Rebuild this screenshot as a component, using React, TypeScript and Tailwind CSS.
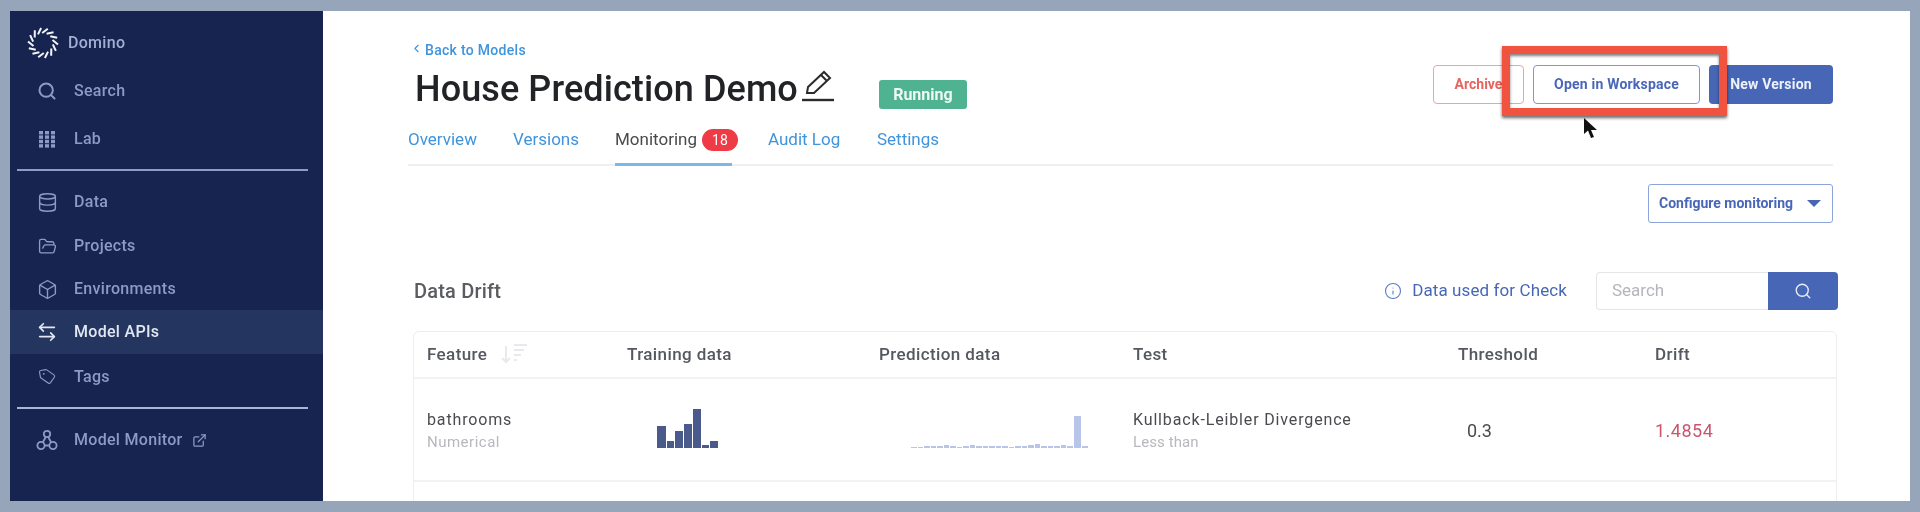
import React from "react";
import { Search, Database, FolderOpen, Box, ArrowLeftRight, Tag, ChevronLeft, Info, ExternalLink } from "lucide-react";

function Logo() {
  const n = 14;
  return (
    <svg width="32" height="32" viewBox="-16 -16 32 32" className="shrink-0">
      {Array.from({ length: n }).map((_, i) => (
        <line key={i} x1="9.5" y1="-3" x2="15" y2="1.5" stroke="#f2f4fa" strokeWidth="2" transform={`rotate(${(360 / n) * i})`} />
      ))}
    </svg>
  );
}

function GridDots() {
  return (
    <svg width="18" height="18" viewBox="0 0 18 18" fill="currentColor">
      {[0, 1, 2, 3].flatMap((r) =>
        [0, 1, 2].map((c) => <rect key={`${r}-${c}`} x={1 + c * 6} y={1 + r * 4.4} width="4" height="3.4" />)
      )}
    </svg>
  );
}

function Monitor() {
  return (
    <svg width="22" height="22" viewBox="0 0 22 22" fill="none" stroke="currentColor" strokeWidth="1.8">
      <circle cx="11" cy="5" r="3.2" />
      <circle cx="5" cy="16.5" r="3.6" />
      <circle cx="17" cy="16.5" r="3.6" />
      <path d="M9.8 8 7 13M12.2 8 15 13M8.6 16.5h4.8" />
    </svg>
  );
}

type NavProps = { icon: React.ReactNode; label: string; active?: boolean; h: string; extra?: React.ReactNode };
function NavItem({ icon, label, active, h, extra }: NavProps) {
  return (
    <div className={`flex items-center pl-[26px] ${h} ${active ? "bg-[#243660] text-[#e3e7f2]" : "text-[#8e9ac4]"}`}>
      <span className="flex w-[22px] justify-center">{icon}</span>
      <span className="ml-[16px] text-[16px] font-medium tracking-[0.3px]">{label}</span>
      {extra}
    </div>
  );
}

const training = [
  [8.5, 22], [7, 7], [7.5, 17], [8, 24], [8, 39], [6.5, 3], [8, 7],
];
const prediction = [1, 1, 2, 2, 2, 3, 2, 1, 2, 3, 2, 2, 2, 2, 2, 1, 2, 2, 3, 4, 2, 2, 2, 3, 2, 32, 2];

export default function App() {
  return (
    <div className="flex h-[512px] w-full bg-[#97a5bb] pt-[11px] pr-[10px] pb-[11px] pl-[10px] blur-[0.6px] font-['Roboto',sans-serif]">
      <aside className="flex w-[313px] shrink-0 flex-col bg-[#17244f]">
        <div className="flex h-[56px] items-center pt-[7px] pl-[17px]">
          <Logo />
          <span className="ml-[9px] text-[16px] font-medium tracking-[0.3px] text-[#a3aed2]">Domino</span>
        </div>
        <NavItem icon={<Search size={20} strokeWidth={2.4} />} label="Search" h="h-[48px]" />
        <NavItem icon={<GridDots />} label="Lab" h="h-[48px]" />
        <div className="mt-[6px] mr-[15px] ml-[7px] h-[2px] bg-[#8b9ccb]" />
        <div className="h-[9px]" />
        <NavItem icon={<Database size={21} strokeWidth={1.6} />} label="Data" h="h-[44px]" />
        <NavItem icon={<FolderOpen size={19} strokeWidth={1.7} />} label="Projects" h="h-[44px]" />
        <NavItem icon={<Box size={21} strokeWidth={1.6} />} label="Environments" h="h-[42px]" />
        <NavItem icon={<ArrowLeftRight size={22} strokeWidth={1.8} />} label="Model APIs" active h="h-[44px]" />
        <NavItem icon={<Tag size={17} strokeWidth={1.6} className="rotate-[-10deg]" />} label="Tags" h="h-[45px]" />
        <div className="mt-[8px] mr-[15px] ml-[7px] h-[2px] bg-[#a9b6da]" />
        <div className="mt-[9px]">
          <NavItem
            icon={<Monitor />}
            label="Model Monitor"
            h="h-[44px]"
            extra={<ExternalLink size={15} strokeWidth={2} className="ml-[9px]" />}
          />
        </div>
      </aside>

      <main className="relative min-w-0 flex-1 overflow-hidden bg-white pt-[31px] pr-[77px] pl-[85px]">
        <div className="flex justify-between">
          <div>
            <div className="flex h-[16px] items-center pl-[2px] text-[14px] font-medium tracking-[0.3px] text-[#3f94dc]">
              <ChevronLeft size={13} strokeWidth={2} className="mb-[3px]" />
              <span className="ml-[2px]">Back to Models</span>
            </div>
            <div className="mt-[9px] flex h-[44px] items-center pl-[7px]">
              <h1 className="text-[36px] font-medium leading-none tracking-[0.1px] text-[#222326]">House Prediction Demo</h1>
              <svg width="34" height="34" viewBox="0 0 34 34" fill="none" stroke="#2a2b2e" strokeWidth="2" className="ml-[3px] mb-[6px]">
                <path d="M6 24 L7 18 L23 3 L29 9 L13 24 Z M20 6 L26 12" />
                <path d="M1 31 H33" strokeWidth="2.4" />
              </svg>
              <span className="ml-[44px] mt-[11px] flex h-[29px] w-[88px] items-center justify-center rounded-[3px] bg-[#4fb391] text-[16px] font-bold text-[#eef8f4]">
                Running
              </span>
            </div>
          </div>
          <div className="flex gap-[9px] pt-[23px]">
            <button className="h-[39px] w-[91px] rounded-[4px] border border-[#f0a3a0] text-[14px] font-bold text-[#e5655f]">Archive</button>
            <button className="h-[39px] w-[167px] rounded-[4px] border border-[#8296d6] text-[14px] font-bold tracking-[0.2px] text-[#4a66b8]">
              Open in Workspace
            </button>
            <button className="h-[39px] w-[124px] rounded-[4px] bg-[#4767b6] text-[14px] font-bold tracking-[0.2px] text-[#eef1fa]">New Version</button>
          </div>
        </div>

        <div className="relative mt-[12px] flex h-[43px] items-center border-b-2 border-[#eef0f2] pb-[7px] text-[17px] text-[#3f94dc]">
          <span className="w-[105px]">Overview</span>
          <span className="w-[102px]">Versions</span>
          <span className="text-[#4a4a4d]">Monitoring</span>
          <span className="ml-[5px] flex h-[22px] w-[36px] items-center justify-center rounded-full bg-[#ef3b45] text-[14px] text-white">18</span>
          <span className="ml-[30px] w-[109px]">Audit Log</span>
          <span>Settings</span>
          <div className="absolute bottom-[-2px] left-[207px] h-[3px] w-[117px] bg-[#7ab8e8]" />
        </div>

        <div className="mt-[18px] flex justify-end">
          <button className="flex h-[39px] w-[185px] items-center justify-between rounded-[3px] border border-[#8da3dc] pr-[11px] pl-[10px] text-[14px] font-bold text-[#4a66b8]">
            Configure monitoring
            <span className="h-0 w-0 border-x-[7px] border-t-[7px] border-x-transparent border-t-[#4767b6]" />
          </button>
        </div>

        <div className="mt-[49px] mr-[-5px] flex h-[38px] items-center">
          <span className="ml-[6px] text-[20px] font-medium tracking-[0.2px] text-[#5a5c60]">Data Drift</span>
          <Info size={18} strokeWidth={1.5} className="ml-auto text-[#5c7ccb]" />
          <span className="ml-[10px] text-[17px] tracking-[0.1px] text-[#4767b6]">Data used for Check</span>
          <div className="ml-[29px] flex h-[38px] w-[172px] items-center rounded-l-[4px] border border-r-0 border-[#e4e6ea] pl-[15px] text-[17px] text-[#b4b6ba]">
            Search
          </div>
          <div className="flex h-[38px] w-[70px] items-center justify-center rounded-r-[4px] bg-[#4767b6]">
            <Search size={18} strokeWidth={1.8} className="text-[#e9edf8]" />
          </div>
        </div>

        <div className="mt-[21px] mr-[-4px] ml-[5px] h-[300px] rounded-[6px] border border-[#eceef0]">
          <div className="grid h-[47px] grid-cols-[200px_252px_254px_325px_197px_1fr] items-center border-b-2 border-[#f1f2f4] pt-[1px] pl-[13px] text-[17px] font-medium tracking-[0.4px] text-[#55585f]">
            <div className="flex items-center">
              Feature
              <svg width="28" height="22" viewBox="0 0 28 22" fill="none" stroke="#e8e9ed" strokeWidth="2" className="ml-[13px] mb-[4px]">
                <path d="M6 4v16M2 16l4 4 4-4M14 3h13M14 8h10M14 13h7M14 18h3" />
              </svg>
            </div>
            <div>Training data</div>
            <div>Prediction data</div>
            <div>Test</div>
            <div>Threshold</div>
            <div>Drift</div>
          </div>
          <div className="grid h-[103px] grid-cols-[200px_252px_254px_325px_197px_1fr] items-center border-b-2 border-[#f1f2f4] pl-[13px]">
            <div className="pt-[2px]">
              <div className="text-[16px] leading-[22px] tracking-[0.85px] text-[#4a4b4f]">bathrooms</div>
              <div className="text-[15px] leading-[22px] tracking-[0.5px] text-[#b6b8bc]">Numerical</div>
            </div>
            <div className="mt-[30px] flex h-[39px] items-end gap-[1.3px] self-start pl-[30px]">
              {training.map(([w, h], i) => (
                <div key={i} className="bg-[#4a5a8a]" style={{ width: w, height: h }} />
              ))}
            </div>
            <div className="mt-[37px] flex h-[32px] items-end gap-[1px] self-start pl-[32px]">
              {prediction.map((h, i) => (
                <div key={i} className="bg-[#b8c5e8]" style={{ width: h > 10 ? 7.5 : 5.5, height: h }} />
              ))}
            </div>
            <div className="pt-[2px]">
              <div className="text-[16px] leading-[22px] tracking-[0.85px] text-[#4a4b4f]">Kullback-Leibler Divergence</div>
              <div className="text-[15px] leading-[22px] tracking-[0.1px] text-[#b6b8bc]">Less than</div>
            </div>
            <div className="pt-[2px] pl-[9px] text-[18px] text-[#4a4b4f]">0.3</div>
            <div className="pt-[2px] text-[18px] tracking-[0.5px] text-[#c9566f]">1.4854</div>
          </div>
        </div>

        <div className="absolute top-[35px] left-[1179px] h-[70px] w-[225px] border-[8px] border-[#f0533f] shadow-[0_2px_3px_rgba(0,0,0,0.6),inset_0_2px_3px_rgba(0,0,0,0.5)]" />
        <svg width="16" height="22" viewBox="0 0 16 22" className="absolute top-[107px] left-[1260px]">
          <path d="M1 0 L1 16 L5 12.5 L8 20 L11 19 L8 12 L14 12 Z" fill="#111" />
        </svg>
      </main>
    </div>
  );
}
